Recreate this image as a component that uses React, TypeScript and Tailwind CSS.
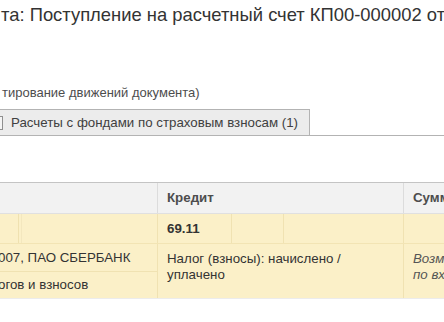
import React from 'react';

const font = "font-['Liberation_Sans',Arial,sans-serif]";

export default function App() {
    return (
        <div className={`w-[444px] h-[322px] overflow-hidden bg-white ${font} text-[#333]`}>
            {/* Title */}
            <div className="pt-[4px] pl-[1px] text-[18.4px] leading-[22px] whitespace-nowrap text-[#333]">
                та: Поступление на расчетный счет КП00-000002 от
            </div>

            {/* Subtitle */}
            <div className="mt-[59px] pl-[2px] text-[13px] leading-[16px] text-[#4d4d4d] whitespace-nowrap">
                тирование движений документа)
            </div>

            {/* Tabs */}
            <div className="mt-[8px] flex h-[27px] border-b border-[#b3b3b3]">
                <div className="h-full w-[310px] bg-[#ececec] border-t border-r border-[#b3b3b3] flex items-center text-[13.3px] text-[#404040] whitespace-nowrap">
                    <div className="-ml-[10px] w-[13px] h-[14px] border border-[#8f8f8f] bg-[#f4f4f4]"></div>
                    <span className="ml-[8px]">Расчеты с фондами по страховым взносам (1)</span>
                </div>
            </div>

            {/* Table */}
            <div className="mt-[46px] text-[13.3px]">
                {/* Header */}
                <div className="grid grid-cols-[158px_246px_1fr] h-[32px] bg-[#f2f2f2] border-t border-[#c4c4c4] border-b border-b-[#e0e0e0]">
                    <div className="border-r border-[#dcdcdc]"></div>
                    <div className="border-r border-[#dcdcdc] pl-[9px] flex items-center font-bold text-[#4d4d4d]">Кредит</div>
                    <div className="pl-[9px] flex items-center font-bold text-[#4d4d4d] whitespace-nowrap">Сумма</div>
                </div>

                {/* Row 1 */}
                <div className="grid grid-cols-[158px_246px_1fr] h-[30px] bg-[#fbf0c8] border-b border-[#f2e4b4]">
                    <div className="flex border-r border-[#f0e2b2]">
                        <div className="w-[19px] border-r border-[#efe1b0]"></div>
                        <div className="w-[3px] border-r border-[#f3e7be]"></div>
                    </div>
                    <div className="flex border-r border-[#f0e2b2]">
                        <div className="w-[74px] border-r border-[#f0e2b2] pl-[9px] flex items-center font-bold text-[#333]">69.11</div>
                        <div className="w-[52px] border-r border-[#f0e2b2]"></div>
                    </div>
                    <div></div>
                </div>

                {/* Row 2 */}
                <div className="grid grid-cols-[158px_246px_1fr] h-[55px] bg-[#fbf0c8] border-b border-[#ececec]">
                    <div className="flex flex-col border-r border-[#f0e2b2] whitespace-nowrap overflow-hidden text-[#333]">
                        <div className="h-[28px] flex items-center border-b border-[#f0e2b2]">
                            <span className="-ml-[2px]">007, ПАО СБЕРБАНК</span>
                        </div>
                        <div className="flex-1 flex items-center">
                            <span className="-ml-[2px]">огов и взносов</span>
                        </div>
                    </div>
                    <div className="border-r border-[#f0e2b2] pl-[9px] pt-[7px] leading-[16px] text-[#333]">
                        Налог (взносы): начислено /<br />уплачено
                    </div>
                    <div className="pl-[9px] pt-[7px] leading-[16px] italic text-[#555] whitespace-nowrap overflow-hidden">
                        Возмещение<br />по входящему
                    </div>
                </div>
            </div>
        </div>
    );
}
